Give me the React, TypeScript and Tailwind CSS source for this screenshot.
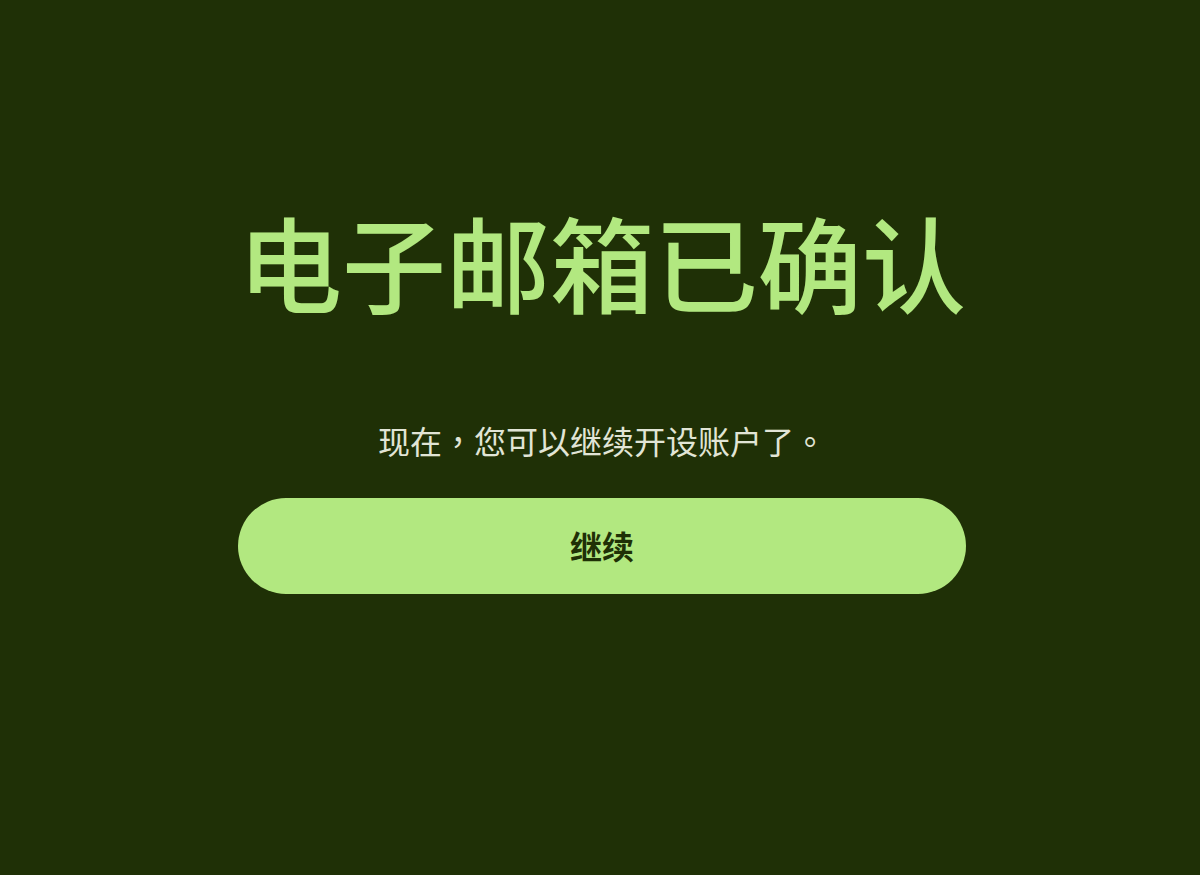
export default function App() {
  return (
    <div
      className="min-h-[875px] w-full bg-[#1f3006] flex flex-col items-center pt-[209px] pl-[4px]"
      style={{ fontFamily: '"Noto Sans CJK TC", "Noto Sans CJK SC", sans-serif' }}
    >
      <h1 className="text-[104px] leading-none font-medium text-[#b2e880] m-0">
        电子邮箱已确认
      </h1>
      <p className="mt-[111px] text-[32px] leading-none text-[#e1e5d6]">
        现在，您可以继续开设账户了。
      </p>
      <button className="mt-[42px] w-[728px] h-[96px] rounded-full bg-[#b2e880] text-[#1f3006] text-[32px] font-bold leading-none flex items-center justify-center pb-[3px]">
        继续
      </button>
    </div>
  );
}
